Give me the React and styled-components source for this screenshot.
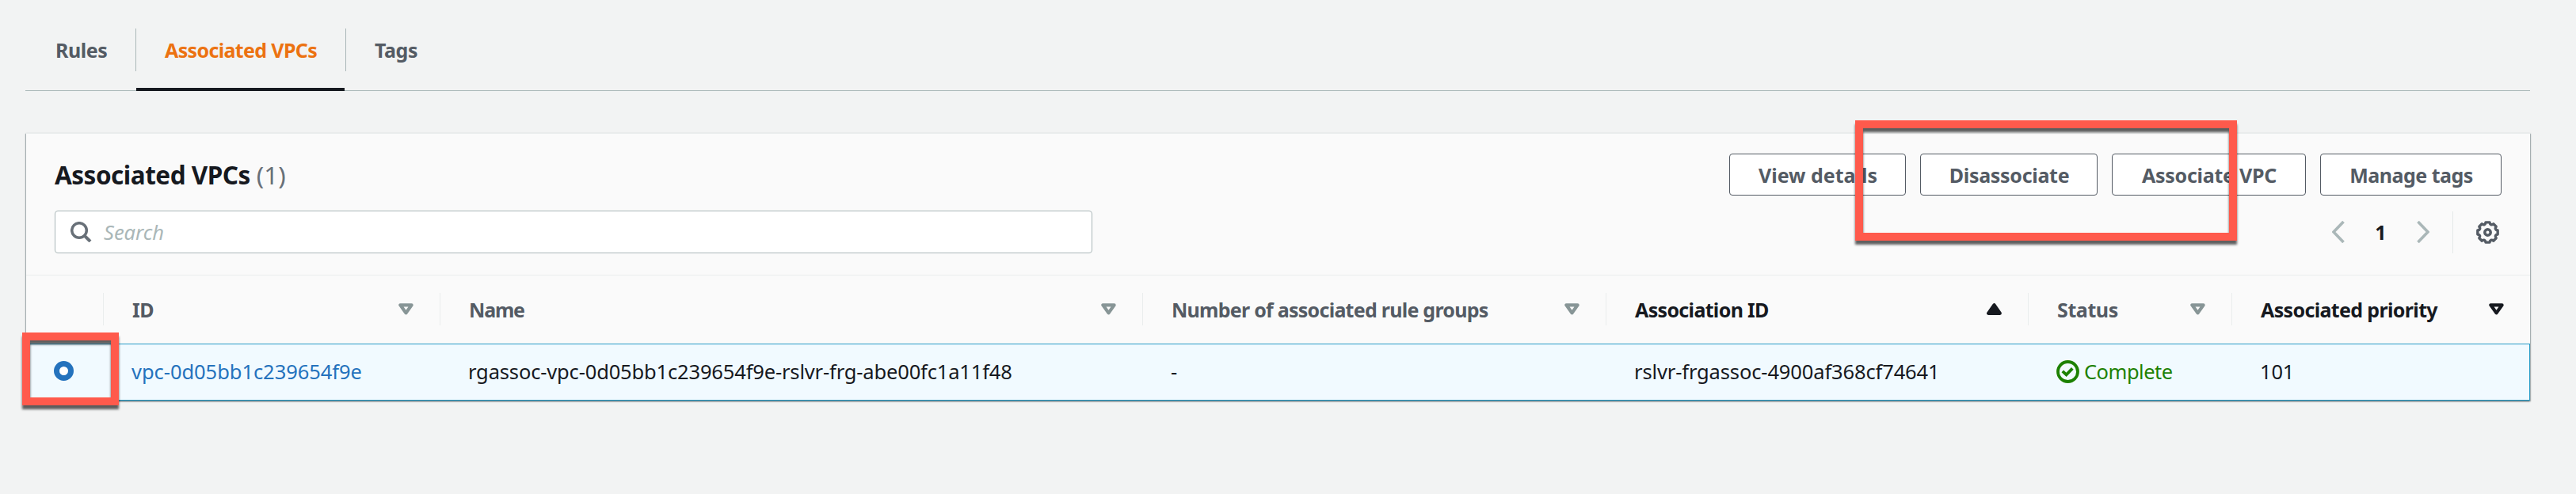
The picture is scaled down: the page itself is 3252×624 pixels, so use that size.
import React from "react";
import styled, { createGlobalStyle, css } from "styled-components";

const GlobalStyle = createGlobalStyle`
  *, *::before, *::after { box-sizing: border-box; }
  body {
    margin: 0;
    background: #f2f3f3;
    color: #16191f;
    font-family: "Noto Sans", "Open Sans", sans-serif;
    font-size: 25.5px;
    overflow: hidden;
  }
`;

const Page = styled.main`
  position: relative;
  height: 624px;
  padding: 0 58px 0 32px;
`;

const Label = styled.span`
  white-space: nowrap;
  letter-spacing: ${(p) => p.$spacing || 0}px;
`;

/* Tabs */
const TabList = styled.nav`
  display: flex;
  height: 115px;
  padding-top: 36px;
  border-bottom: 1px solid #aab7b8;
`;

const Tab = styled.div`
  display: flex;
  flex-direction: column;
  justify-content: space-between;
  width: ${(p) => p.$width}px;
  height: 79px;
  color: ${(p) => (p.$active ? "#ec7211" : "#545b64")};
  font-size: 25px;
  font-weight: 700;

  &::after {
    content: "";
    height: 4px;
    margin: 0 1px;
    background: ${(p) => (p.$active ? "#16191f" : "transparent")};
  }
`;

const TabTitle = styled.div`
  display: flex;
  align-items: center;
  height: 54px;
  padding: 0 0 1px ${(p) => (p.$first ? 38 : 36)}px;
  border-left: ${(p) => (p.$first ? "0" : "1px solid #aab7b8")};
`;

/* Panel */
const Panel = styled.section`
  margin: 53px 0 0 1px;
  background: #fafafa;
  border-top: 1px solid #eaeded;
  box-shadow: 0 1px 2px rgba(0, 28, 36, 0.5), 1px 1px 1px rgba(0, 28, 36, 0.18),
    -1px 1px 1px rgba(0, 28, 36, 0.18);
`;

const PanelHeader = styled.header`
  padding: 25px 36px 27px;
  border-bottom: 1px solid #eaeded;
`;

const HeaderRow = styled.div`
  display: flex;
  align-items: center;
  justify-content: space-between;
  height: ${(p) => p.$height}px;
  margin-top: ${(p) => p.$top || 0}px;
`;

const Title = styled.h2`
  display: flex;
  gap: 8px;
  margin: 0;
  font-size: 31.5px;
  line-height: 53px;
`;

const Counter = styled.span`
  color: #687078;
  font-weight: 400;
`;

const Actions = styled.div`
  display: flex;
  gap: 18px;
`;

const Button = styled.button`
  display: flex;
  align-items: center;
  justify-content: center;
  width: ${(p) => p.$width}px;
  height: 53px;
  padding: 0 0 0 1px;
  border: 1px solid #545b64;
  border-radius: 4px;
  background: #fff;
  color: #545b64;
  font: 700 25px "Noto Sans", "Open Sans", sans-serif;
`;

const SearchField = styled.div`
  display: flex;
  align-items: center;
  gap: 15px;
  width: 1310px;
  height: 54px;
  padding-left: 19px;
  border: 1px solid #aab7b8;
  border-radius: 4px;
  background: #fff;
  color: #aab7b8;
  font-style: italic;
`;

const Pager = styled.div`
  display: flex;
  align-items: center;
  height: 54px;
  padding-right: 3px;
`;

const PageNumber = styled.span`
  width: 91px;
  text-align: center;
  font-size: 25px;
  font-weight: 700;
`;

const PagerDivider = styled.span`
  width: 1px;
  height: 53px;
  margin: 0 29px;
  background: #e4e8e8;
`;

/* Table */
const columns = css`
  display: grid;
  grid-template-columns: 98px 425px 887px 585px 533px 257px 376px;
`;

const HeadRow = styled.div`
  ${columns}
  height: 86px;
  align-items: center;
  padding-bottom: 1px;
`;

const HeadCell = styled.div`
  display: flex;
  align-items: center;
  justify-content: space-between;
  height: 41px;
  padding: 0 33px 0 36px;
  border-right: ${(p) => (p.$last ? "0" : "1px solid #eaeded")};
  color: ${(p) => (p.$dark ? "#16191f" : "#545b64")};
  font-size: 25px;
  font-weight: 700;
`;

const BodyRow = styled.div`
  ${columns}
  height: 72px;
  align-items: center;
  padding-bottom: 2px;
  border: 1px solid #269bc6;
  border-left-width: 0;
  background: #f1faff;
`;

const Cell = styled.div`
  display: flex;
  align-items: center;
  padding-left: 35px;
  color: ${(p) => p.$color || "#16191f"};
`;

const StatusCell = styled(Cell)`
  gap: 6px;
  color: #1d8102;
`;

const Radio = styled.span`
  width: 25px;
  height: 25px;
  margin-bottom: 1px;
  border: 7.5px solid #2472bd;
  border-radius: 50%;
  background: #fff;
`;

/* Annotation frames drawn over the page */
const Highlight = styled.div`
  position: absolute;
  left: ${(p) => p.$x}px;
  top: ${(p) => p.$y}px;
  width: ${(p) => p.$w}px;
  height: ${(p) => p.$h}px;
  border: 10px solid #ff5a4c;
  filter: drop-shadow(0 5px 1.5px rgba(0, 0, 0, 0.62));
`;

const SearchIcon = () => (
  <svg width="27" height="26" viewBox="0 0 27 26" fill="none" stroke="#687078">
    <circle cx="11" cy="11" r="9.3" strokeWidth="3.5" />
    <path d="M17.3 17.3 25 25" strokeWidth="4" />
  </svg>
);

const Chevron = ({ right }) => (
  <svg width="16" height="28" viewBox="0 0 16 28" fill="none" stroke="#aab7b8" strokeWidth="3.6">
    <path d={right ? "M1.5 1 14 14 1.5 27" : "M14.5 1 2 14 14.5 27"} />
  </svg>
);

const gearPath = (() => {
  const at = (r, deg) => {
    const a = (deg * Math.PI) / 180;
    return `${(14.5 + r * Math.sin(a)).toFixed(2)} ${(14.5 - r * Math.cos(a)).toFixed(2)}`;
  };
  let d = "";
  for (let i = 0; i < 8; i += 1) {
    const a = i * 45;
    d += `${i ? "L" : "M"}${at(12.9, a - 11)} L${at(12.9, a + 11)} Q${at(8.8, a + 22.5)} ${at(12.9, a + 34)} `;
  }
  return `${d}Z`;
})();

const GearIcon = () => (
  <svg width="29" height="29" viewBox="0 0 29 29" fill="none" stroke="#545b64">
    <path d={gearPath} strokeWidth="3.4" strokeLinejoin="round" />
    <circle cx="14.5" cy="14.5" r="3.7" strokeWidth="3.5" />
  </svg>
);

const SortIcon = ({ dark, ascending }) => {
  const color = dark ? "#16191f" : "#879596";
  return (
    <svg width="19" height="15" viewBox="0 0 19 15" stroke={color} strokeWidth="4.2" strokeLinejoin="round" fill={ascending ? color : "none"}>
      <path d={ascending ? "M2.2 12.8H16.8L9.5 2.2Z" : "M2.4 2.3H16.6L9.5 12.4Z"} />
    </svg>
  );
};

const SuccessIcon = () => (
  <svg width="29" height="29" viewBox="0 0 29 29" fill="none" stroke="#1d8102" strokeWidth="3.8">
    <circle cx="14.5" cy="14.5" r="12.5" />
    <path d="M7.8 13.8 12.6 18.3 20.3 10.4" />
  </svg>
);

const tabs = [
  { text: "Rules", width: 139, spacing: -0.45 },
  { text: "Associated VPCs", width: 265, spacing: -0.65, active: true },
  { text: "Tags", width: 130, spacing: -0.4 },
];

const buttons = [
  { text: "View details", width: 223, spacing: 0 },
  { text: "Disassociate", width: 224, spacing: -0.3 },
  { text: "Associate VPC", width: 245, spacing: -0.25 },
  { text: "Manage tags", width: 229, spacing: -0.5 },
];

const headings = [
  { text: "ID", spacing: -0.5 },
  { text: "Name", spacing: -1.2 },
  { text: "Number of associated rule groups", spacing: -0.74 },
  { text: "Association ID", spacing: -0.67, dark: true, ascending: true },
  { text: "Status", spacing: -0.4 },
  { text: "Associated priority", spacing: -0.65, dark: true, last: true },
];

export default function App() {
  return (
    <>
      <GlobalStyle />
      <Page>
        <TabList>
          {tabs.map((tab, i) => (
            <Tab key={tab.text} $width={tab.width} $active={tab.active}>
              <TabTitle $first={i === 0}>
                <Label $spacing={tab.spacing}>{tab.text}</Label>
              </TabTitle>
            </Tab>
          ))}
        </TabList>

        <Panel>
          <PanelHeader>
            <HeaderRow $height={53}>
              <Title>
                <Label $spacing={-0.5}>Associated VPCs</Label>
                <Counter>(1)</Counter>
              </Title>
              <Actions>
                {buttons.map((b) => (
                  <Button key={b.text} $width={b.width}>
                    <Label $spacing={b.spacing}>{b.text}</Label>
                  </Button>
                ))}
              </Actions>
            </HeaderRow>
            <HeaderRow $height={54} $top={19}>
              <SearchField>
                <SearchIcon />
                <Label>Search</Label>
              </SearchField>
              <Pager>
                <Chevron />
                <PageNumber>1</PageNumber>
                <Chevron right />
                <PagerDivider />
                <GearIcon />
              </Pager>
            </HeaderRow>
          </PanelHeader>

          <HeadRow>
            <HeadCell />
            {headings.map((h) => (
              <HeadCell key={h.text} $dark={h.dark} $last={h.last}>
                <Label $spacing={h.spacing}>{h.text}</Label>
                <SortIcon dark={h.dark} ascending={h.ascending} />
              </HeadCell>
            ))}
          </HeadRow>
          <BodyRow>
            <Cell>
              <Radio />
            </Cell>
            <Cell $color="#2472bd">
              <Label $spacing={-0.05}>vpc-0d05bb1c239654f9e</Label>
            </Cell>
            <Cell>
              <Label $spacing={-0.16}>rgassoc-vpc-0d05bb1c239654f9e-rslvr-frg-abe00fc1a11f48</Label>
            </Cell>
            <Cell>
              <Label>-</Label>
            </Cell>
            <Cell>
              <Label $spacing={-0.13}>rslvr-frgassoc-4900af368cf74641</Label>
            </Cell>
            <StatusCell>
              <SuccessIcon />
              <Label $spacing={-0.5}>Complete</Label>
            </StatusCell>
            <Cell>
              <Label $spacing={-0.2}>101</Label>
            </Cell>
          </BodyRow>
        </Panel>

        <Highlight $x={28} $y={420} $w={122} $h={92} />
        <Highlight $x={2342} $y={152} $w={482} $h={152} />
      </Page>
    </>
  );
}
